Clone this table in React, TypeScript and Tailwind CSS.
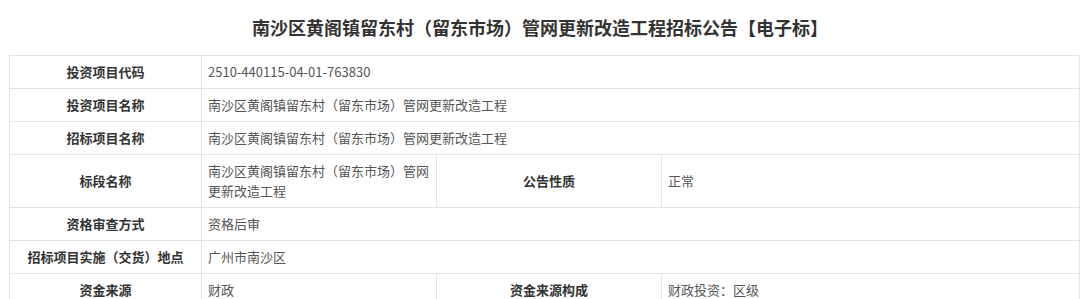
import React from 'react';

const font = { fontFamily: '"Noto Sans CJK SC", "Noto Sans", sans-serif' };

function Label({ children }: { children: React.ReactNode }) {
  return (
    <div className="flex items-center justify-center border-r border-b border-[#e3e3e3] px-2 py-[6px] text-[13px] leading-[20px] font-bold text-[#333]">
      {children}
    </div>
  );
}

function Value({ children, span = false }: { children: React.ReactNode; span?: boolean }) {
  return (
    <div
      className={`flex items-center border-r border-b border-[#e3e3e3] pl-[6px] pr-[6px] py-[6px] text-[13px] leading-[20px] text-[#555] ${
        span ? 'col-span-3' : ''
      }`}
    >
      {children}
    </div>
  );
}

export default function App() {
  return (
    <div className="w-[1080px] h-[299px] overflow-hidden bg-white" style={font}>
      <div className="h-[55px] flex items-center justify-center text-[18px] font-bold text-[#333]">
        南沙区黄阁镇留东村（留东市场）管网更新改造工程招标公告【电子标】
      </div>
      <div className="ml-[9px] w-[1070px] grid grid-cols-[192px_235px_225px_418px] border-l border-t border-[#e3e3e3]">
        <Label>投资项目代码</Label>
        <Value span>2510-440115-04-01-763830</Value>

        <Label>投资项目名称</Label>
        <Value span>南沙区黄阁镇留东村（留东市场）管网更新改造工程</Value>

        <Label>招标项目名称</Label>
        <Value span>南沙区黄阁镇留东村（留东市场）管网更新改造工程</Value>

        <Label>标段名称</Label>
        <Value>南沙区黄阁镇留东村（留东市场）管网更新改造工程</Value>
        <Label>公告性质</Label>
        <Value>正常</Value>

        <Label>资格审查方式</Label>
        <Value span>资格后审</Value>

        <Label>招标项目实施（交货）地点</Label>
        <Value span>广州市南沙区</Value>

        <Label>资金来源</Label>
        <Value>财政</Value>
        <Label>资金来源构成</Label>
        <Value>财政投资：区级</Value>
      </div>
    </div>
  );
}
